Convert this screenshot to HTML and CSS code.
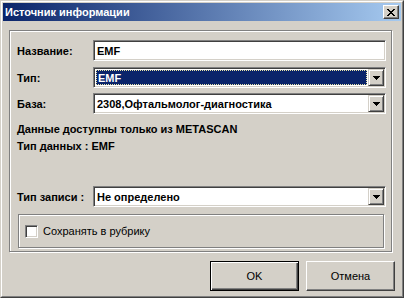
FILE: index.html
```html
<!DOCTYPE html>
<html lang="ru">
<head>
<meta charset="utf-8">
<title>Источник информации</title>
<link rel="stylesheet" href="styles.css">
</head>
<body>
<div class="window">
  <div class="frame">
    <div class="titlebar">
      <span class="title">Источник информации</span>
      <span class="close">
        <svg width="8" height="7" viewBox="0 0 8 7" shape-rendering="crispEdges">
          <rect x="0" y="0" width="2" height="1" fill="#000"/>
          <rect x="6" y="0" width="2" height="1" fill="#000"/>
          <rect x="1" y="1" width="2" height="1" fill="#000"/>
          <rect x="5" y="1" width="2" height="1" fill="#000"/>
          <rect x="2" y="2" width="4" height="1" fill="#000"/>
          <rect x="3" y="3" width="2" height="1" fill="#000"/>
          <rect x="2" y="4" width="4" height="1" fill="#000"/>
          <rect x="1" y="5" width="2" height="1" fill="#000"/>
          <rect x="5" y="5" width="2" height="1" fill="#000"/>
          <rect x="0" y="6" width="2" height="1" fill="#000"/>
          <rect x="6" y="6" width="2" height="1" fill="#000"/>
        </svg>
      </span>
    </div>
    <div class="content">
      <div class="group">
        <div class="row">
          <span class="label">Название:</span>
          <div class="field"><span class="text">EMF</span></div>
        </div>
        <div class="row row-2">
          <span class="label">Тип:</span>
          <div class="field">
            <span class="text selected">EMF</span>
            <span class="dd"><svg width="7" height="4" viewBox="0 0 7 4" shape-rendering="crispEdges"><rect x="0" y="0" width="7" height="1"/><rect x="1" y="1" width="5" height="1"/><rect x="2" y="2" width="3" height="1"/><rect x="3" y="3" width="1" height="1"/></svg></span>
          </div>
        </div>
        <div class="row row-3">
          <span class="label">База:</span>
          <div class="field">
            <span class="text">2308,Офтальмолог-диагностика</span>
            <span class="dd"><svg width="7" height="4" viewBox="0 0 7 4" shape-rendering="crispEdges"><rect x="0" y="0" width="7" height="1"/><rect x="1" y="1" width="5" height="1"/><rect x="2" y="2" width="3" height="1"/><rect x="3" y="3" width="1" height="1"/></svg></span>
          </div>
        </div>
        <div class="info first">Данные доступны только из METASCAN</div>
        <div class="info">Тип данных : EMF</div>
        <div class="row row-4">
          <span class="label">Тип записи :</span>
          <div class="field">
            <span class="text">Не определено</span>
            <span class="dd"><svg width="7" height="4" viewBox="0 0 7 4" shape-rendering="crispEdges"><rect x="0" y="0" width="7" height="1"/><rect x="1" y="1" width="5" height="1"/><rect x="2" y="2" width="3" height="1"/><rect x="3" y="3" width="1" height="1"/></svg></span>
          </div>
        </div>
        <div class="subgroup">
          <span class="checkbox"></span>
          <span class="check-label">Сохранять в рубрику</span>
        </div>
      </div>
      <div class="buttons">
        <span class="btn default">OK</span>
        <span class="btn">Отмена</span>
      </div>
    </div>
  </div>
</div>
</body>
</html>
```

FILE: styles.css
```css
html, body {
  margin: 0;
  padding: 0;
  background: #D4D0C8;
}

.window {
  width: 404px;
  height: 298px;
  box-sizing: border-box;
  border: 1px solid;
  border-color: #D4D0C8 #404040 #404040 #D4D0C8;
  background: #D4D0C8;
  font-family: "Liberation Sans", Arial, sans-serif;
  font-size: 11px;
  color: #000;
}

.frame {
  height: 100%;
  box-sizing: border-box;
  border: 1px solid;
  border-color: #fff #808080 #808080 #fff;
  padding: 1px;
  display: flex;
  flex-direction: column;
}

.titlebar {
  height: 18px;
  flex: none;
  background: linear-gradient(to right, #0A246A, #A6CAF0);
  display: flex;
  align-items: center;
  justify-content: space-between;
  padding: 0 2px 0 2px;
  color: #fff;
  font-weight: bold;
}

.title {
  line-height: 18px;
}

.close {
  width: 16px;
  height: 14px;
  box-sizing: border-box;
  background: #D4D0C8;
  border: 1px solid;
  border-color: #fff #404040 #404040 #fff;
  box-shadow: inset -1px -1px #808080;
  display: flex;
  align-items: center;
  justify-content: center;
}

.close svg {
  display: block;
}

.content {
  flex: 1;
  padding: 9px 6px 0 6px;
  display: flex;
  flex-direction: column;
}

.group {
  width: 383px;
  height: 222px;
  box-sizing: border-box;
  border: 1px solid #808080;
  box-shadow: inset 1px 1px #fff, 1px 1px #fff;
  padding: 9px 5px 0 7px;
  display: flex;
  flex-direction: column;
}

.row {
  display: flex;
  align-items: center;
  height: 21px;
  flex: none;
}

.row-2 { margin-top: 6px; }
.row-3 { margin-top: 5px; }
.row-4 { margin-top: 31px; }

.label {
  width: 76px;
  flex: none;
  font-weight: bold;
}

.field {
  width: 293px;
  height: 21px;
  box-sizing: border-box;
  border: 1px solid;
  border-color: #808080 #fff #fff #808080;
  box-shadow: inset 1px 1px #404040, inset -1px -1px #D4D0C8;
  background: #fff;
  padding: 1px;
  display: flex;
  align-items: center;
  font-weight: bold;
}

.text {
  flex: 1;
  padding-left: 2px;
  white-space: nowrap;
}

.text.selected {
  height: 15px;
  box-sizing: border-box;
  margin: 0 1px 0 1px;
  padding-left: 1px;
  background: #0A246A;
  color: #fff;
  border: 1px dotted #E8E4A8;
  display: flex;
  align-items: center;
}

.dd {
  width: 16px;
  height: 17px;
  flex: none;
  box-sizing: border-box;
  background: #D4D0C8;
  border: 1px solid;
  border-color: #D4D0C8 #404040 #404040 #D4D0C8;
  box-shadow: inset 1px 1px #fff, inset -1px -1px #808080;
  display: flex;
  align-items: center;
  justify-content: center;
}

.dd svg {
  display: block;
  fill: #000;
}

.info {
  font-weight: bold;
  line-height: 17px;
}

.info.first {
  margin-top: 7px;
}

.subgroup {
  margin-top: 7px;
  margin-left: 1px;
  width: 366px;
  height: 34px;
  box-sizing: border-box;
  border: 1px solid #808080;
  box-shadow: inset 1px 1px #fff, 1px 1px #fff;
  padding-left: 6px;
  display: flex;
  align-items: center;
}

.checkbox {
  width: 13px;
  height: 13px;
  box-sizing: border-box;
  border: 1px solid;
  border-color: #808080 #fff #fff #808080;
  box-shadow: inset 1px 1px #404040, inset -1px -1px #D4D0C8;
  background: #fff;
  flex: none;
}

.check-label {
  margin-left: 5px;
}

.buttons {
  margin-top: 9px;
  display: flex;
  justify-content: flex-end;
  gap: 7px;
}

.btn {
  width: 89px;
  height: 30px;
  box-sizing: border-box;
  background: #D4D0C8;
  border: 1px solid;
  border-color: #fff #404040 #404040 #fff;
  box-shadow: inset -1px -1px #808080;
  display: flex;
  align-items: center;
  justify-content: center;
}

.btn.default {
  border: 1px solid #000;
  box-shadow: inset 1px 1px #fff, inset -1px -1px #404040, inset -2px -2px #808080;
}
```
